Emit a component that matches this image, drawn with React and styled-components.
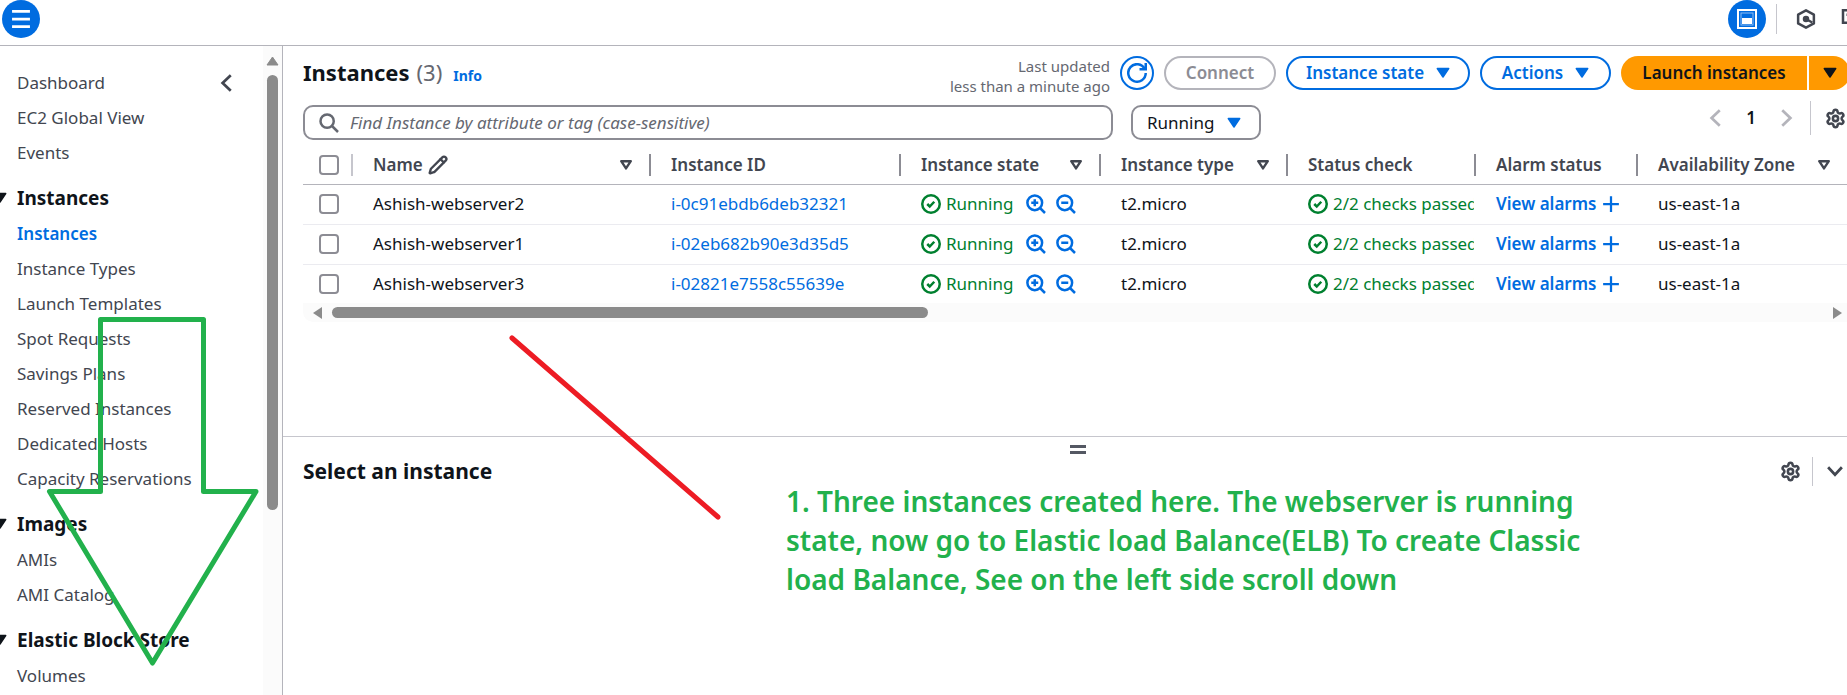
import React from 'react';
import styled, { createGlobalStyle, css } from 'styled-components';
import { Settings, Pencil } from 'lucide-react';

const Global = createGlobalStyle`
  *, *::before, *::after { box-sizing: border-box; }
  html, body { margin: 0; background: #fff; }
  body, button, input, select {
    font-family: "Noto Sans", "Open Sans", sans-serif;
    font-size: 17px;
    line-height: 24px;
    color: #0f141a;
  }
  button { border: 0; padding: 0; background: none; cursor: pointer; }
  a { text-decoration: none; color: #006ce0; }
  h1, h2, h3, p, ul { margin: 0; padding: 0; }
  ul { list-style: none; }
`;

const Shell = styled.div`
  position: relative;
  display: grid;
  grid-template-rows: 46px minmax(0, 1fr);
  grid-template-columns: 283px minmax(0, 1fr);
  height: 100vh;
  overflow: hidden;
`;

const TopBar = styled.header`
  grid-column: 1 / -1;
  display: flex;
  align-items: flex-start;
  justify-content: space-between;
  padding-left: 2px;
  border-bottom: 1px solid #b4b4bb;
  overflow: hidden;
`;

const RoundButton = styled.button`
  display: grid;
  place-items: center;
  flex: none;
  width: 38px;
  height: 38px;
  border-radius: 50%;
  background: #006ce0;
  color: #fff;
`;

const Divider = styled.span`
  width: 1px;
  height: ${(p) => p.$height}px;
  background: #c6c6cd;
`;

const TopTools = styled.div`
  display: flex;
  align-items: center;
  margin-right: -16px;
  & > ${Divider} { margin-left: 10px; }
`;

const IconButton = styled.button`
  display: grid;
  place-items: center;
  flex: none;
  width: ${(p) => p.$width || 20}px;
  height: 34px;
  color: ${(p) => (p.$muted ? '#b4b4bb' : '#424650')};
`;

const Sidebar = styled.aside`
  display: grid;
  grid-template-columns: minmax(0, 1fr) 19px;
  min-height: 0;
  border-right: 1px solid #b4b4bb;
`;

const Nav = styled.nav`
  display: flex;
  align-items: flex-start;
  justify-content: space-between;
  padding: 20px 26px 0 0;
  overflow: hidden;
`;

const NavItem = styled.a`
  display: block;
  padding: 5px 0 6px 17px;
  white-space: nowrap;
  color: #424650;
  ${(p) => p.$active && css`
    color: #006ce0;
    font-weight: 600;
  `}
`;

const NavHeading = styled.h3`
  display: flex;
  align-items: center;
  gap: 10px;
  height: 38px;
  margin-top: 8px;
  margin-left: -7px;
  font-size: 19px;
  font-weight: 700;
  white-space: nowrap;
`;

const VTrack = styled.div`
  display: flex;
  flex-direction: column;
  align-items: center;
  gap: 9px;
  padding-top: 10px;
  background: #fbfbfb;
`;

const VThumb = styled.span`
  width: 11px;
  height: 68%;
  border-radius: 6px;
  background: #8b8b8b;
`;

const Main = styled.main`
  display: grid;
  grid-template-rows: 390px minmax(0, 1fr);
  min-width: 0;
  min-height: 0;
`;

const Panel = styled.section`
  padding-left: 20px;
  overflow: hidden;
`;

const TitleRow = styled.div`
  display: flex;
  align-items: flex-start;
  justify-content: space-between;
  height: 59px;
  padding-top: 10px;
  margin-right: -3px;
`;

const Title = styled.h1`
  display: flex;
  align-items: baseline;
  gap: 7px;
  font-size: 22px;
  font-weight: 700;
  line-height: 32px;
`;

const Count = styled.span`
  font-weight: 400;
  color: #656871;
`;

const InfoLink = styled.a`
  margin-left: 4px;
  font-size: 14px;
`;

const Actions = styled.div`
  display: flex;
  gap: 10px;
  flex: none;
`;

const Updated = styled.p`
  font-size: 15px;
  line-height: 20px;
  text-align: right;
  color: #656871;
`;

const PillButton = styled.button`
  display: flex;
  align-items: center;
  justify-content: center;
  gap: 12px;
  width: ${(p) => p.$width}px;
  height: 34px;
  border: 2px solid #006ce0;
  border-radius: 17px;
  font-weight: 600;
  color: #006ce0;
  &:disabled { border-color: #b4b4bb; color: #8c8c94; }
`;

const SplitButton = styled.div`
  display: flex;
  gap: 2px;
`;

const LaunchPart = styled.button`
  display: grid;
  place-items: center;
  width: ${(p) => p.$width}px;
  height: 34px;
  border-radius: ${(p) => (p.$end ? '0 17px 17px 0' : '17px 0 0 17px')};
  background: #ff9900;
  font-weight: 600;
`;

const FilterRow = styled.div`
  display: flex;
  align-items: flex-start;
  gap: 18px;
  height: 35px;
`;

const SearchBox = styled.label`
  display: flex;
  align-items: center;
  gap: 11px;
  flex: 1;
  max-width: 810px;
  height: 35px;
  padding: 0 14px;
  border: 2px solid #8c8c94;
  border-radius: 10px;
  color: #656871;
`;

const SearchInput = styled.input`
  flex: 1;
  min-width: 0;
  padding: 0;
  border: 0;
  outline: 0;
  background: none;
  &::placeholder { font-style: italic; color: #656871; opacity: 1; }
`;

const SelectBox = styled.div`
  display: grid;
  align-items: center;
  width: 130px;
  height: 35px;
  border: 2px solid #8c8c94;
  border-radius: 10px;
  & > * { grid-area: 1 / 1; }
  & > svg { justify-self: end; margin-right: 18px; color: #006ce0; pointer-events: none; }
`;

const Select = styled.select`
  appearance: none;
  width: 100%;
  padding: 0 14px;
  border: 0;
  outline: 0;
  background: none;
`;

const Pager = styled.div`
  display: flex;
  align-items: center;
  gap: 14px;
  margin: -4px 2px 0 auto;
`;

const PageButton = styled.button`
  width: 22px;
  height: 34px;
  font-weight: 600;
`;

const Table = styled.table`
  width: 100%;
  table-layout: fixed;
  border-collapse: collapse;
`;

const HeadCell = styled.th`
  width: ${(p) => (p.$width ? `${p.$width}px` : 'auto')};
  height: 44px;
  padding: 0 0 8px;
  border-bottom: 1px solid #b4b4bb;
  vertical-align: bottom;
  font-weight: 600;
  text-align: left;
  color: #424650;
`;

const HeadInner = styled.div`
  display: flex;
  align-items: center;
  gap: 5px;
  height: 22px;
  padding: 0 16px 0 20px;
  white-space: nowrap;
  border-right: ${(p) => (p.$last ? '0' : '2px')} solid #8c8c94;
  & > [data-caret] { margin-left: auto; }
`;

const Cell = styled.td`
  height: 40px;
  padding: 0 2px 0 20px;
  border-bottom: 1px solid #ebebf0;
  white-space: nowrap;
  tr:last-child > & { height: 39px; border-bottom: 0; }
`;

const Line = styled.div`
  display: flex;
  align-items: center;
  gap: ${(p) => p.$gap || 5}px;
  overflow: hidden;
`;

const Status = styled.span`
  display: flex;
  align-items: center;
  gap: 5px;
  flex: none;
  color: #00802f;
`;

const Zooms = styled.span`
  display: flex;
  gap: 10px;
  color: #006ce0;
`;

const ZoomButton = styled.button`
  display: grid;
  width: 20px;
  height: 20px;
  color: inherit;
`;

const AlarmLink = styled.a`
  display: flex;
  align-items: center;
  gap: 6px;
  font-weight: 600;
`;

const CheckCell = styled.div`
  display: flex;
  align-items: center;
  height: 22px;
  padding-left: ${(p) => (p.$head ? 16 : 0)}px;
  margin-left: ${(p) => (p.$head ? 0 : -4)}px;
  border-right: ${(p) => (p.$head ? '2px solid #c6c6cd' : '0')};
`;

const Checkbox = styled.input`
  appearance: none;
  width: 20px;
  height: 20px;
  margin: 0;
  border: 2px solid #8c8c94;
  border-radius: 4px;
  background: #fff;
`;

const HTrack = styled.div`
  display: flex;
  align-items: center;
  gap: 10px;
  height: 19px;
  padding: 0 5px 0 10px;
  border-radius: 0 0 0 10px;
  background: #fbfbfb;
  color: #8b8b8b;
  & > svg:last-child { margin-left: auto; }
`;

const HThumb = styled.span`
  width: 39%;
  height: 11px;
  border-radius: 6px;
  background: #8b8b8b;
`;

const SplitPanel = styled.section`
  display: flex;
  flex-direction: column;
  border-top: 1px solid #c6c6cd;
  overflow: hidden;
`;

const Handle = styled.button`
  display: grid;
  gap: 3px;
  align-self: center;
  width: 16px;
  margin: 8px 0 0 26px;
  & > span { height: 3px; background: #545863; }
`;

const SplitHead = styled.div`
  display: flex;
  align-items: center;
  justify-content: space-between;
  height: 34px;
  padding: 0 2px 0 20px;
`;

const SplitTitle = styled.h2`
  font-size: 21px;
  font-weight: 700;
  line-height: 34px;
`;

const SplitTools = styled.div`
  display: flex;
  align-items: center;
  gap: 12px;
`;

const Note = styled.p`
  width: 840px;
  margin: -6px 0 0 503px;
  font-size: 28px;
  font-weight: 650;
  line-height: 39px;
  white-space: pre-line;
  color: #22b14c;
`;

const Markup = styled.svg`
  position: absolute;
  top: 0;
  left: 0;
  width: 760px;
  height: 695px;
  pointer-events: none;
`;

const Icon = ({ size = 20, w = 2, children, ...rest }) => (
  <svg width={size} height={size} viewBox="0 0 16 16" fill="none" stroke="currentColor" strokeWidth={w} aria-hidden="true" {...rest}>
    {children}
  </svg>
);

const Caret = ({ hollow }) =>
  hollow ? (
    <svg width="14" height="12" viewBox="0 0 14 12" fill="none" stroke="currentColor" strokeWidth="2.4" strokeLinejoin="round" data-caret="" aria-hidden="true">
      <path d="M2.2 2.2h9.6L7 9.4z" />
    </svg>
  ) : (
    <svg width="14" height="12" viewBox="0 0 14 12" fill="currentColor" stroke="currentColor" strokeWidth="1.5" strokeLinejoin="round" aria-hidden="true">
      <path d="M1.3 1.5h11.4L7 10z" />
    </svg>
  );

const CheckIcon = () => (
  <Icon w={2}>
    <circle cx="8" cy="8" r="7" />
    <path d="M5 8l2 2 3.6-3.8" />
  </Icon>
);

const ZoomIcon = ({ plus }) => (
  <Icon w={2}>
    <circle cx="7" cy="7" r="5.9" />
    <path d="M11.2 11.2L15.2 15.2M4.2 7h5.6" />
    {plus && <path d="M7 4.2v5.6" />}
  </Icon>
);

const Gear = () => <Settings size={21} strokeWidth={2.9} aria-hidden="true" />;

const chevrons = {
  left: 'M11 1.8L4.5 8l6.5 6.2',
  right: 'M5 1.8L11.5 8 5 14.2',
  down: 'M2.5 5L8 11l5.500-6',
};

const Chevron = ({ dir }) => (
  <Icon w={2.2}>
    <path d={chevrons[dir]} />
  </Icon>
);

const groups = [
  { items: ['Dashboard', 'EC2 Global View', 'Events'] },
  {
    title: 'Instances',
    items: ['Instances', 'Instance Types', 'Launch Templates', 'Spot Requests', 'Savings Plans', 'Reserved Instances', 'Dedicated Hosts', 'Capacity Reservations'],
  },
  { title: 'Images', items: ['AMIs', 'AMI Catalog'] },
  { title: 'Elastic Block Store', items: ['Volumes'] },
];

const columns = [
  { label: 'Name', width: 298, sort: true, edit: true },
  { label: 'Instance ID', width: 250 },
  { label: 'Instance state', width: 200, sort: true },
  { label: 'Instance type', width: 187, sort: true },
  { label: 'Status check', width: 188 },
  { label: 'Alarm status', width: 162 },
  { label: 'Availability Zone', sort: true },
];

const rows = [
  ['Ashish-webserver2', 'i-0c91ebdb6deb32321'],
  ['Ashish-webserver1', 'i-02eb682b90e3d35d5'],
  ['Ashish-webserver3', 'i-02821e7558c55639e'],
];

const note = `1. Three instances created here. The webserver is running
state, now go to Elastic load Balance(ELB) To create Classic
load Balance, See on the left side scroll down`;

export default function App() {
  return (
    <Shell>
      <Global />
      <TopBar>
        <RoundButton aria-label="Open navigation">
          <Icon size={22}><path d="M1.5 2.5h13M1.5 8h13M1.5 13.5h13" /></Icon>
        </RoundButton>
        <TopTools>
          <RoundButton aria-label="Split panel">
            <svg width="20" height="20" viewBox="0 0 20 20" aria-hidden="true">
              <rect x="1" y="1" width="18" height="18" fill="none" stroke="#fff" strokeWidth="2" />
              <rect x="4" y="4" width="12" height="12" fill="none" stroke="#8dbcf2" strokeWidth="1" />
              <rect x="5" y="9" width="10" height="6" fill="#fff" />
            </svg>
          </RoundButton>
          <Divider $height={30} />
          <IconButton aria-label="Resources" $width={58}>
            <Icon>
              <path d="M8 1.1L14.3 4.5v7L8 14.9 1.7 11.500v-7z" strokeLinejoin="round" />
              <circle cx="8" cy="8" r="1.6" fill="currentColor" />
              <path d="M8 8l5 2.800" />
            </Icon>
          </IconButton>
          <IconButton aria-label="Console" $width={28}>
            <Icon><rect x="3.2" y="1" width="12" height="10" /><path d="M6 4.500h2" /></Icon>
          </IconButton>
        </TopTools>
      </TopBar>

      <Sidebar>
        <Nav aria-label="EC2">
          <ul>
            {groups.map((g, gi) => (
              <li key={gi}>
                {g.title && <NavHeading><Caret />{g.title}</NavHeading>}
                <ul>
                  {g.items.map((item) => (
                    <li key={item}><NavItem href="#" $active={item === 'Instances'}>{item}</NavItem></li>
                  ))}
                </ul>
              </li>
            ))}
          </ul>
          <IconButton aria-label="Collapse navigation"><Chevron dir="left" /></IconButton>
        </Nav>
        <VTrack>
          <svg width="13" height="10" viewBox="0 0 13 10" fill="#8b8b8b" stroke="#8b8b8b" strokeLinejoin="round" aria-hidden="true"><path d="M6.5 1L12 9H1z" /></svg>
          <VThumb />
        </VTrack>
      </Sidebar>

      <Main>
        <Panel>
          <TitleRow>
            <Title>Instances <Count>(3)</Count><InfoLink href="#">Info</InfoLink></Title>
            <Actions>
              <Updated>Last updated<br />less than a minute ago</Updated>
              <PillButton $width={34} aria-label="Refresh">
                <Icon>
                  <path d="M10 5h5V0" />
                  <path d="M15 8a7 7 0 1 1-.8-3.3" />
                </Icon>
              </PillButton>
              <PillButton $width={112} disabled>Connect</PillButton>
              <PillButton $width={184}>Instance state <Caret /></PillButton>
              <PillButton $width={131}>Actions <Caret /></PillButton>
              <SplitButton>
                <LaunchPart $width={186}>Launch instances</LaunchPart>
                <LaunchPart $width={41} $end aria-label="More launch options"><Caret /></LaunchPart>
              </SplitButton>
            </Actions>
          </TitleRow>

          <FilterRow>
            <SearchBox>
              <Icon w={2}><circle cx="6.5" cy="6.5" r="5.3" /><path d="M10.2 10.2l5 5" /></Icon>
              <SearchInput aria-label="Find instances" placeholder="Find Instance by attribute or tag (case-sensitive)" />
            </SearchBox>
            <SelectBox>
              <Select aria-label="Instance state filter"><option>Running</option></Select>
              <Caret />
            </SelectBox>
            <Pager>
              <IconButton $muted aria-label="Previous page"><Chevron dir="left" /></IconButton>
              <PageButton>1</PageButton>
              <IconButton $muted aria-label="Next page"><Chevron dir="right" /></IconButton>
              <Divider $height={34} />
              <IconButton aria-label="Preferences"><Gear /></IconButton>
            </Pager>
          </FilterRow>

          <Table>
            <thead>
              <tr>
                <HeadCell $width={50}>
                  <CheckCell $head><Checkbox type="checkbox" aria-label="Select all instances" /></CheckCell>
                </HeadCell>
                {columns.map((c, i) => (
                  <HeadCell key={c.label} $width={c.width}>
                    <HeadInner $last={i === columns.length - 1}>
                      {c.label}
                      {c.edit && <Pencil size={20} strokeWidth={2.8} aria-hidden="true" />}
                      {c.sort && <Caret hollow />}
                    </HeadInner>
                  </HeadCell>
                ))}
              </tr>
            </thead>
            <tbody>
              {rows.map(([name, id]) => (
                <tr key={id}>
                  <Cell><CheckCell><Checkbox type="checkbox" aria-label={`Select ${name}`} /></CheckCell></Cell>
                  <Cell>{name}</Cell>
                  <Cell><a href="#">{id}</a></Cell>
                  <Cell>
                    <Line $gap={13}>
                      <Status><CheckIcon />Running</Status>
                      <Zooms>
                        <ZoomButton aria-label="Filter to this state"><ZoomIcon plus /></ZoomButton>
                        <ZoomButton aria-label="Exclude this state"><ZoomIcon /></ZoomButton>
                      </Zooms>
                    </Line>
                  </Cell>
                  <Cell>t2.micro</Cell>
                  <Cell><Line><Status><CheckIcon />2/2 checks passed</Status></Line></Cell>
                  <Cell><AlarmLink href="#">View alarms <Icon size={18}><path d="M8 1v14M1 8h14" /></Icon></AlarmLink></Cell>
                  <Cell>us-east-1a</Cell>
                </tr>
              ))}
            </tbody>
          </Table>
          <HTrack>
            <svg width="9" height="12" viewBox="0 0 9 12" fill="currentColor" aria-hidden="true"><path d="M9 0v12L0 6z" /></svg>
            <HThumb />
            <svg width="9" height="12" viewBox="0 0 9 12" fill="currentColor" aria-hidden="true"><path d="M0 0v12l9-6z" /></svg>
          </HTrack>
        </Panel>

        <SplitPanel>
          <Handle aria-label="Resize panel"><span /><span /></Handle>
          <SplitHead>
            <SplitTitle>Select an instance</SplitTitle>
            <SplitTools>
              <IconButton aria-label="Panel preferences"><Gear /></IconButton>
              <Divider $height={29} />
              <IconButton aria-label="Close panel"><Chevron dir="down" /></IconButton>
            </SplitTools>
          </SplitHead>
          <Note>{note}</Note>
        </SplitPanel>
      </Main>

      <Markup viewBox="0 0 760 695" fill="none" strokeWidth="5" strokeLinejoin="round" strokeLinecap="round" aria-hidden="true">
        <path d="M100.5 319.5h103v172h52.5L152.5 663 49.5 491.5h51z" stroke="#22b14c" />
        <path d="M512 338L718 517" stroke="#ed1c24" />
      </Markup>
    </Shell>
  );
}
